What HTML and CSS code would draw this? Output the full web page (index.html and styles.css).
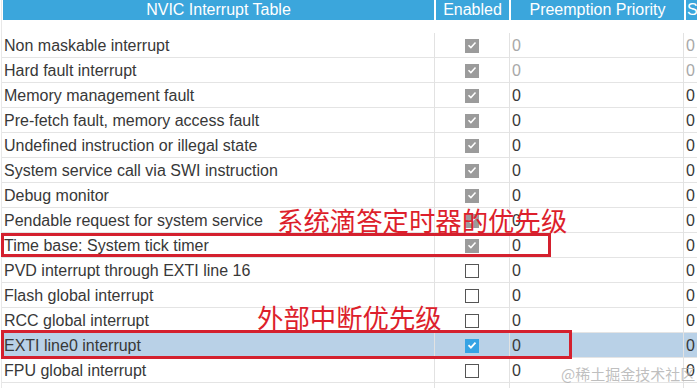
FILE: index.html
```html
<!DOCTYPE html>
<html>
<head>
<meta charset="utf-8">
<link rel="stylesheet" href="styles.css">
</head>
<body>
<div class="page">
  <div class="table">
    <div class="head">
      <div class="hcell hname">NVIC Interrupt Table</div>
      <div class="hcell">Enabled</div>
      <div class="hcell">Preemption Priority</div>
      <div class="hcell hsub">Sub Priority</div>
    </div>
    <div class="spacer"></div>
    <div class="row"><div class="name">Non maskable interrupt</div><div class="en"><span class="cb fixed"><svg viewBox="0 0 14 14"><path d="M3.5 7.2l2.4 2.4 4.6-5"/></svg></span></div><div class="num dim">0</div><div class="num dim">0</div></div>
    <div class="row"><div class="name">Hard fault interrupt</div><div class="en"><span class="cb fixed"><svg viewBox="0 0 14 14"><path d="M3.5 7.2l2.4 2.4 4.6-5"/></svg></span></div><div class="num dim">0</div><div class="num dim">0</div></div>
    <div class="row"><div class="name">Memory management fault</div><div class="en"><span class="cb fixed"><svg viewBox="0 0 14 14"><path d="M3.5 7.2l2.4 2.4 4.6-5"/></svg></span></div><div class="num">0</div><div class="num">0</div></div>
    <div class="row"><div class="name">Pre-fetch fault, memory access fault</div><div class="en"><span class="cb fixed"><svg viewBox="0 0 14 14"><path d="M3.5 7.2l2.4 2.4 4.6-5"/></svg></span></div><div class="num">0</div><div class="num">0</div></div>
    <div class="row"><div class="name">Undefined instruction or illegal state</div><div class="en"><span class="cb fixed"><svg viewBox="0 0 14 14"><path d="M3.5 7.2l2.4 2.4 4.6-5"/></svg></span></div><div class="num">0</div><div class="num">0</div></div>
    <div class="row"><div class="name">System service call via SWI instruction</div><div class="en"><span class="cb fixed"><svg viewBox="0 0 14 14"><path d="M3.5 7.2l2.4 2.4 4.6-5"/></svg></span></div><div class="num">0</div><div class="num">0</div></div>
    <div class="row"><div class="name">Debug monitor</div><div class="en"><span class="cb fixed"><svg viewBox="0 0 14 14"><path d="M3.5 7.2l2.4 2.4 4.6-5"/></svg></span></div><div class="num">0</div><div class="num">0</div></div>
    <div class="row"><div class="name">Pendable request for system service</div><div class="en"><span class="cb fixed"><svg viewBox="0 0 14 14"><path d="M3.5 7.2l2.4 2.4 4.6-5"/></svg></span></div><div class="num">0</div><div class="num">0</div></div>
    <div class="row"><div class="name">Time base: System tick timer</div><div class="en"><span class="cb fixed"><svg viewBox="0 0 14 14"><path d="M3.5 7.2l2.4 2.4 4.6-5"/></svg></span></div><div class="num">0</div><div class="num">0</div></div>
    <div class="row"><div class="name">PVD interrupt through EXTI line 16</div><div class="en"><span class="cb"></span></div><div class="num">0</div><div class="num">0</div></div>
    <div class="row"><div class="name">Flash global interrupt</div><div class="en"><span class="cb"></span></div><div class="num">0</div><div class="num">0</div></div>
    <div class="row"><div class="name">RCC global interrupt</div><div class="en"><span class="cb"></span></div><div class="num">0</div><div class="num">0</div></div>
    <div class="row sel"><div class="name">EXTI line0 interrupt</div><div class="en"><span class="cb on"><svg viewBox="0 0 14 14"><path d="M3.5 7.2l2.4 2.4 4.6-5"/></svg></span></div><div class="num">0</div><div class="num">0</div></div>
    <div class="row"><div class="name">FPU global interrupt</div><div class="en"><span class="cb"></span></div><div class="num">0</div><div class="num">0</div></div>
    <div class="row"><div class="name">&nbsp;</div><div class="en"></div><div class="num"></div><div class="num"></div></div>
  </div>

  <div class="mark mark1"></div>
  <div class="mark mark2"></div>
  <div class="note note1">系统滴答定时器的优先级</div>
  <div class="note note2">外部中断优先级</div>
  <div class="wm">@稀土掘金技术社区</div>
</div>
</body>
</html>
```
FILE: styles.css
```css
html, body {
  margin: 0;
  padding: 0;
  background: #ffffff;
}
body {
  font-family: "Liberation Sans", Arial, sans-serif;
  color: #383838;
  overflow: hidden;
  width: 697px;
  height: 388px;
}
.page {
  position: relative;
  width: 697px;
  height: 388px;
  overflow: hidden;
}
.table {
  padding-left: 2px;
  border-left: 1px solid #e8e8e8;
  margin-left: 1px;
}
.head {
  display: grid;
  grid-template-columns: 430px 73px 173px 40px;
  column-gap: 2px;
  height: 20px;
}
.hcell {
  background: #3ba6dc;
  color: #ffffff;
  font-size: 16px;
  line-height: 19px;
  text-align: center;
  white-space: nowrap;
  overflow: hidden;
}
.hname {
  margin-left: -1px;
}
.hsub {
  text-align: left;
  padding-left: 1px;
}
.spacer {
  height: 13px;
}
.row {
  display: grid;
  grid-template-columns: 430px 75px 174px 40px;
  height: 24px;
  border-bottom: 1px solid #e4e4e4;
  margin-left: -2px;
  padding-left: 2px;
}
.row.sel {
  background: #b9d1e7;
}
.name {
  font-size: 16px;
  line-height: 25px;
  white-space: nowrap;
  color: #383838;
}
.en {
  border-left: 1px solid #e2e2e2;
  display: flex;
  align-items: center;
  justify-content: center;
  padding-left: 0;
}
.num {
  border-left: 1px solid #e2e2e2;
  font-size: 16px;
  line-height: 25px;
  padding-left: 2px;
  color: #383838;
}
.num.dim {
  color: #a8a8a8;
}
.cb {
  width: 14px;
  height: 14px;
  box-sizing: border-box;
  border: 1.5px solid #555555;
  background: #ffffff;
  display: block;
}
.cb svg {
  display: block;
  width: 14px;
  height: 14px;
  margin: -1.5px;
}
.cb path {
  fill: none;
  stroke: #ffffff;
  stroke-width: 1.5;
}
.cb.fixed {
  background: #9b9b9b;
  border-color: #9b9b9b;
}
.cb.on {
  background: #36a3e4;
  border-color: #36a3e4;
}
.cb.on path {
  stroke-width: 1.8;
}

.mark {
  position: absolute;
  border: 3px solid #d4202e;
  box-sizing: border-box;
}
.mark1 {
  left: 1px;
  top: 233px;
  width: 550px;
  height: 24px;
}
.mark2 {
  left: 1px;
  top: 330px;
  width: 571px;
  height: 29px;
}
.note {
  position: absolute;
  color: #dd1f2c;
  font-family: "Noto Sans CJK SC", "Noto Sans", sans-serif;
  font-weight: 400;
  font-size: 26.4px;
  line-height: 30px;
  white-space: nowrap;
}
.note1 {
  left: 277px;
  top: 205px;
}
.note2 {
  left: 257px;
  top: 302px;
}
.wm {
  position: absolute;
  left: 561px;
  top: 364px;
  font-family: "Noto Sans CJK SC", "Noto Sans", sans-serif;
  font-size: 15px;
  line-height: 20px;
  color: rgba(170, 170, 170, 0.75);
  white-space: nowrap;
}
```
